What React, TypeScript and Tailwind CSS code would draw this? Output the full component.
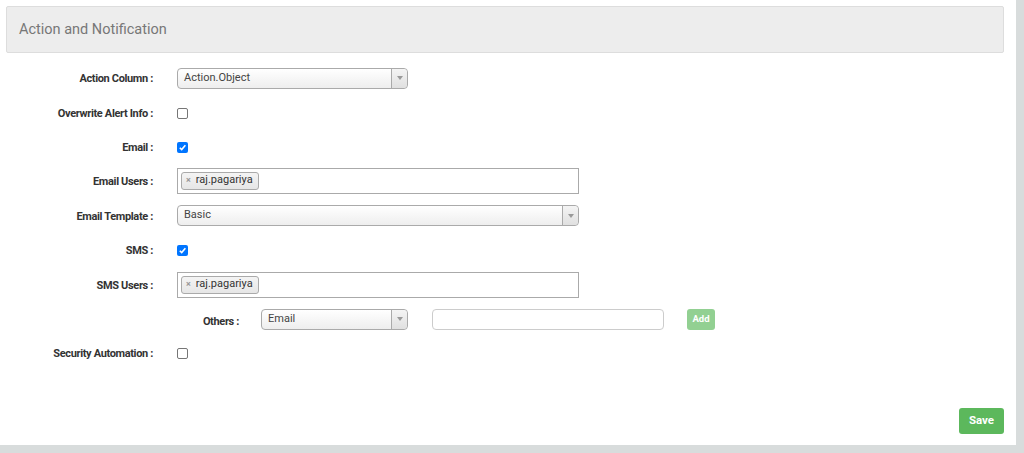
import React from "react";

const font = { fontFamily: "Roboto, 'Noto Sans', sans-serif" };

function Label({ children }: { children: React.ReactNode }) {
  return (
    <div className="w-[153px] shrink-0 pt-[3px] text-right text-[11px] font-bold text-[#333] tracking-[-0.35px]">
      {children}
    </div>
  );
}

function Arrow() {
  return (
    <div className="flex w-[16px] items-center justify-center self-stretch border-l border-[#aaa] bg-gradient-to-b from-[#f4f4f4] to-[#e0e0e0] rounded-r-[4px]">
      <div className="h-0 w-0 border-x-[3px] border-t-[4px] border-x-transparent border-t-[#999]" />
    </div>
  );
}

function Select({ value, width }: { value: string; width: string }) {
  return (
    <div
      className={`flex h-[21px] items-stretch rounded-[4px] border border-[#aaa] bg-gradient-to-b from-white to-[#eeeeee] ${width}`}
    >
      <div className="flex flex-1 items-center pl-[6px] text-[11px] text-[#444]">{value}</div>
      <Arrow />
    </div>
  );
}

function Checkbox({ checked }: { checked?: boolean }) {
  if (checked) {
    return (
      <div className="flex h-[11px] w-[11px] items-center justify-center rounded-[2px] bg-[#0075ff]">
        <svg width="9" height="9" viewBox="0 0 10 10">
          <path d="M2 5.3 L4.1 7.3 L8.2 2.6" fill="none" stroke="white" strokeWidth="1.8" />
        </svg>
      </div>
    );
  }
  return <div className="h-[11px] w-[11px] rounded-[2px] border border-[#767676] bg-white" />;
}

function TagInput() {
  return (
    <div className="flex h-[26px] w-[402px] items-center border border-[#aaa] bg-white pl-[3px]">
      <div className="flex h-[18px] items-center gap-[5px] rounded-[3px] border border-[#aaa] bg-gradient-to-b from-[#f4f4f4] to-[#e6e6e6] pl-[4px] pr-[5px] text-[11px] text-[#333]">
        <span className="text-[9px] font-bold leading-none text-[#999]">×</span>
        <span>raj.pagariya</span>
      </div>
    </div>
  );
}

function Row({ h, children }: { h: string; children: React.ReactNode }) {
  return <div className={`flex items-center ${h}`}>{children}</div>;
}

export default function App() {
  return (
    <div className="flex h-[453px] w-[1024px] bg-[#d8dcdc]" style={font}>
      <div className="flex h-[445px] w-[1016px] flex-col bg-white">
        <div className="ml-[6px] mt-[6px] flex h-[47px] w-[998px] items-center rounded-[2px] border border-[#dddddd] bg-[#ededed] pl-[12px]">
          <span className="pt-[1px] text-[14.5px] text-[#777]">Action and Notification</span>
        </div>
        <div className="flex flex-col pt-[8px]">
          <Row h="h-[34px]">
            <Label>Action Column :</Label>
            <div className="ml-[24px]">
              <Select value="Action.Object" width="w-[231px]" />
            </div>
          </Row>
          <Row h="h-[35px]">
            <Label>Overwrite Alert Info :</Label>
            <div className="ml-[24px] pt-[1px]">
              <Checkbox />
            </div>
          </Row>
          <Row h="h-[33px]">
            <Label>Email :</Label>
            <div className="ml-[24px] pt-[1px]">
              <Checkbox checked />
            </div>
          </Row>
          <Row h="h-[35px]">
            <Label>Email Users :</Label>
            <div className="ml-[24px]">
              <TagInput />
            </div>
          </Row>
          <Row h="h-[35px]">
            <Label>Email Template :</Label>
            <div className="ml-[24px]">
              <Select value="Basic" width="w-[402px]" />
            </div>
          </Row>
          <Row h="h-[34px]">
            <Label>SMS :</Label>
            <div className="ml-[24px] pt-[1px]">
              <Checkbox checked />
            </div>
          </Row>
          <Row h="h-[35px]">
            <Label>SMS Users :</Label>
            <div className="ml-[24px]">
              <TagInput />
            </div>
          </Row>
          <Row h="h-[34px]">
            <div className="w-[239px] shrink-0 pt-[6px] text-right text-[11px] font-bold text-[#333] tracking-[-0.35px]">
              Others :
            </div>
            <div className="ml-[22px]">
              <Select value="Email" width="w-[147px]" />
            </div>
            <div className="ml-[24px] h-[21px] w-[232px] rounded-[4px] border border-[#ccc] bg-white" />
            <div className="ml-[23px] flex h-[21px] w-[28px] items-center justify-center rounded-[3px] bg-[#92d092] text-[9.5px] font-bold text-white">
              Add
            </div>
          </Row>
          <Row h="h-[34px]">
            <Label>Security Automation :</Label>
            <div className="ml-[24px] pt-[1px]">
              <Checkbox />
            </div>
          </Row>
        </div>
        <div className="mt-[38px] flex justify-end pr-[12px]">
          <div className="flex h-[26px] w-[45px] items-center justify-center rounded-[3px] bg-[#5cb85c] text-[11.5px] font-bold text-white">
            Save
          </div>
        </div>
      </div>
    </div>
  );
}
